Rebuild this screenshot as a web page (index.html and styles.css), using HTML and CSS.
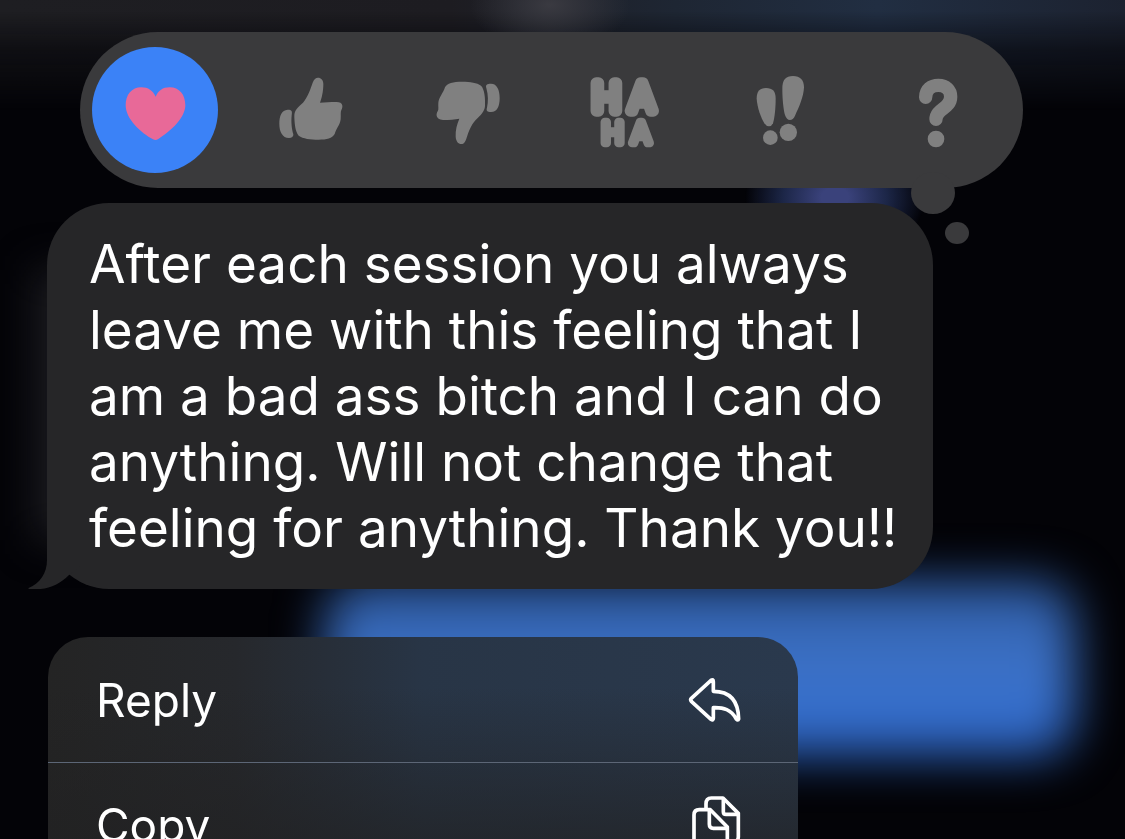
FILE: index.html
```html
<!DOCTYPE html>
<html lang="en">
<head>
<meta charset="utf-8">
<meta name="viewport" content="width=device-width, initial-scale=1">
<title>Message</title>
<link rel="stylesheet" href="styles.css">
</head>
<body>
<div class="backdrop" aria-hidden="true">
  <div class="glow glow-top"></div>
  <div class="glow glow-spot"></div>
  <div class="glow glow-violet"></div>
  <div class="glow glow-left"></div>
  <div class="glow glow-blue"></div>
</div>
<main class="screen">
  <div class="reactions" role="group" aria-label="Reactions">
    <button class="reaction selected" type="button" aria-label="Love">
      <svg viewBox="36 51 378 378"><path d="M227 200C218 182 205 172 184 172C155 172 137 194 137 226C137 268 185 310 219 328Q227 332 235 327C275 302 316 262 316 226C316 194 298 172 269 172C248 172 235 182 227 200Z"/></svg>
    </button>
    <button class="reaction" type="button" aria-label="Like">
      <svg viewBox="506 51 378 378">
        <path d="M719 218C724 205 729 185 729 162C729 150 722 143 713 143C706 143 701 148 697 158C690 178 683 200 668 218C654 230 642 240 642 258V262C643 285 645 305 655 317C668 326 690 329 715 329C740 329 755 325 763 312C768 295 779 285 781 268C782 255 780 246 783 240C788 232 790 216 768 216C750 216 735 217 719 218Z"/>
        <path d="M622 239C604 240 597 258 597 282C597 305 606 324 626 324C634 324 640 320 639 313C634 298 632 275 634 256C636 244 635 239 622 239Z"/>
      </svg>
    </button>
    <button class="reaction" type="button" aria-label="Dislike">
      <svg viewBox="16 -9 378 378">
        <path d="M179 206C172 222 167 240 168 260C169 274 176 282 185 282C193 282 197 275 201 263C207 245 214 225 228 210C243 196 255 184 256 168C257 145 255 118 244 107C232 98 212 95 188 95C160 95 142 100 136 112C130 130 118 142 116 158C115 170 118 178 114 184C109 192 107 208 130 210C150 210 165 208 179 206Z"/>
        <path d="M274 101C292 101 300 120 300 144C300 168 293 186 274 186C263 186 259 182 262 173C266 155 266 135 260 114C257 104 262 101 274 101Z"/>
      </svg>
    </button>
    <button class="reaction" type="button" aria-label="Ha ha">
      <svg viewBox="485 -9 378 378">
        <text class="laugh laugh-big" x="577 688" y="182">HA</text>
        <text class="laugh laugh-small" x="606 694" y="278">HA</text>
      </svg>
    </button>
    <button class="reaction" type="button" aria-label="Emphasize">
      <svg viewBox="-5 51 378 378">
        <path d="M139 174C120 174 111 184 111 206C113 235 124 262 134 280Q140 289 148 289Q156 289 160 280C165 262 168 235 168 206C168 184 159 174 139 174Z"/>
        <circle cx="152" cy="323" r="22"/>
        <path d="M220 138C198 138 188 150 188 176C188 210 192 240 196 255Q201 270 211 270Q220 270 226 257C238 232 252 200 253 172C253 150 242 138 220 138Z"/>
        <circle cx="206" cy="307" r="26"/>
      </svg>
    </button>
    <button class="reaction" type="button" aria-label="Question">
      <svg viewBox="465 51 378 378">
        <path class="hook" d="M617 202C617 178 634 166 655 166C678 166 692 180 692 200C692 236 648 236 648 268"/>
        <circle cx="648" cy="327" r="25"/>
      </svg>
    </button>
    <span class="puff puff-large"></span>
    <span class="puff puff-small"></span>
  </div>

  <div class="bubble">
    <p class="message">After each session you always leave me with this feeling that I am a bad ass bitch and I can do anything. Will not change that feeling for anything. Thank you!!</p>
    <svg class="tail" viewBox="84 81 156 186" aria-hidden="true"><path d="M141 81V180C141 220 120 250 84 265L88 267H122C155 264 182 250 207 225L240 200V81Z"/></svg>
  </div>

  <div class="menu">
    <button class="menu-item" type="button">
      <span>Reply</span>
      <svg class="icon-reply" viewBox="140 170 168 144" aria-hidden="true"><path d="M153 237L212 183Q219 178 219 187V216C270 216 294 245 295 299Q293 305 288 299C272 270 250 264 219 265V297Q219 305 212 300L153 246Q149 241 153 237Z"/></svg>
    </button>
    <button class="menu-item" type="button">
      <span>Copy</span>
      <svg class="icon-copy" viewBox="140 525 168 186" aria-hidden="true">
        <path d="M197 571V555Q197 537 213 537H248L294 583V654Q294 668 280 668H262"/>
        <path d="M249 540V578Q249 586 257 586H294"/>
        <path d="M161 588Q161 572 177 572H210L261 624V690Q261 704 247 704H175Q161 704 161 690Z"/>
        <path d="M207 574V616Q207 628 219 628H261"/>
      </svg>
    </button>
  </div>
</main>
</body>
</html>
```

FILE: styles.css
```css
* {
  box-sizing: border-box;
}

body {
  margin: 0;
  height: 100vh;
  overflow: hidden;
  background: #030307;
  color: #fff;
  font-family: Inter, "Liberation Sans", sans-serif;
}

button {
  border: 0;
  padding: 0;
  background: none;
  color: inherit;
  font: inherit;
}

/* Blurred conversation behind the overlay */
.backdrop {
  position: fixed;
  inset: 0;
  overflow: hidden;
}

.glow {
  position: absolute;
}

.glow-top {
  top: 0;
  left: 0;
  right: 0;
  height: 110px;
  background: linear-gradient(90deg, #1e1e22 0%, #1d1c21 40%, #1e2633 60%, #212e42 78%, #1c2230 100%);
  mask-image: linear-gradient(#000 10%, rgba(0, 0, 0, 0.45) 45%, transparent);
}

.glow-spot {
  top: -40px;
  left: 470px;
  width: 160px;
  height: 90px;
  background: radial-gradient(closest-side, #3a3a41, transparent);
}

.glow-violet {
  top: 130px;
  left: 745px;
  width: 180px;
  height: 135px;
  background: radial-gradient(closest-side, #3a427b 15%, #1c2647 58%, transparent);
}

.glow-left {
  top: 270px;
  left: 36px;
  width: 60px;
  height: 270px;
  background: #1c1c21;
  filter: blur(20px);
}

.glow-blue {
  top: 580px;
  left: 325px;
  right: 50px;
  height: 176px;
  border-radius: 40px;
  background: linear-gradient(#2c579c, #3d73c9 50%, #2c66c9);
  filter: blur(24px);
}

.screen {
  position: relative;
  padding-top: 32px;
}

.reactions {
  position: relative;
  z-index: 1;
  display: flex;
  justify-content: space-between;
  margin: 0 102px 0 80px;
  padding: 15px 22px 15px 12px;
  border-radius: 78px;
  background: #3a3a3c;
}

.reaction {
  width: 126px;
  height: 126px;
  border-radius: 50%;
}

.reaction svg {
  display: block;
  width: 100%;
  height: 100%;
  fill: #808080;
}

.reaction.selected {
  background: #3b82f7;
}

.reaction.selected svg {
  fill: #e86998;
}

.laugh {
  font-family: Roboto, sans-serif;
  font-weight: 300;
  stroke: #808080;
  stroke-linejoin: round;
}

.laugh-big {
  font-size: 116px;
  stroke-width: 34px;
}

.laugh-small {
  font-size: 88px;
  stroke-width: 26px;
}

.hook {
  fill: none;
  stroke: #808080;
  stroke-width: 40px;
  stroke-linecap: round;
}

.puff {
  position: absolute;
  border-radius: 50%;
  background: #3a3a3c;
}

.puff-large {
  right: 68px;
  bottom: -26px;
  width: 44px;
  height: 42px;
}

.puff-small {
  right: 54px;
  bottom: -56px;
  width: 24px;
  height: 22px;
}

.bubble {
  position: relative;
  margin: 15px 192px 0 47px;
  padding: 28px 24px 28px 42px;
  border-radius: 62px;
  background: #262628;
}

.message {
  margin: 0;
  font-size: 53px;
  line-height: 66px;
}

.tail {
  position: absolute;
  left: -19px;
  bottom: 0;
  width: 52px;
  height: 62px;
  fill: #262628;
}

.menu {
  position: relative;
  margin: 48px 327px 0 48px;
  border-radius: 40px;
  overflow: hidden;
  background:
    linear-gradient(rgba(33, 33, 34, 0) 20%, rgba(33, 33, 34, 0.9)),
    linear-gradient(90deg, #242424 0%, #26282c 25%, #283546 50%, #2a394d 100%);
}

.menu-item {
  display: flex;
  align-items: center;
  justify-content: space-between;
  width: 100%;
  height: 125px;
  padding: 0 55px 0 48px;
  font-size: 46px;
  text-align: left;
}

.menu-item + .menu-item {
  border-top: 1px solid #5c6676;
}

.menu-item svg {
  width: 56px;
  fill: none;
  stroke: #fff;
  stroke-width: 11px;
  stroke-linejoin: round;
}

.icon-reply {
  height: 48px;
}

.icon-copy {
  height: 62px;
}
```
